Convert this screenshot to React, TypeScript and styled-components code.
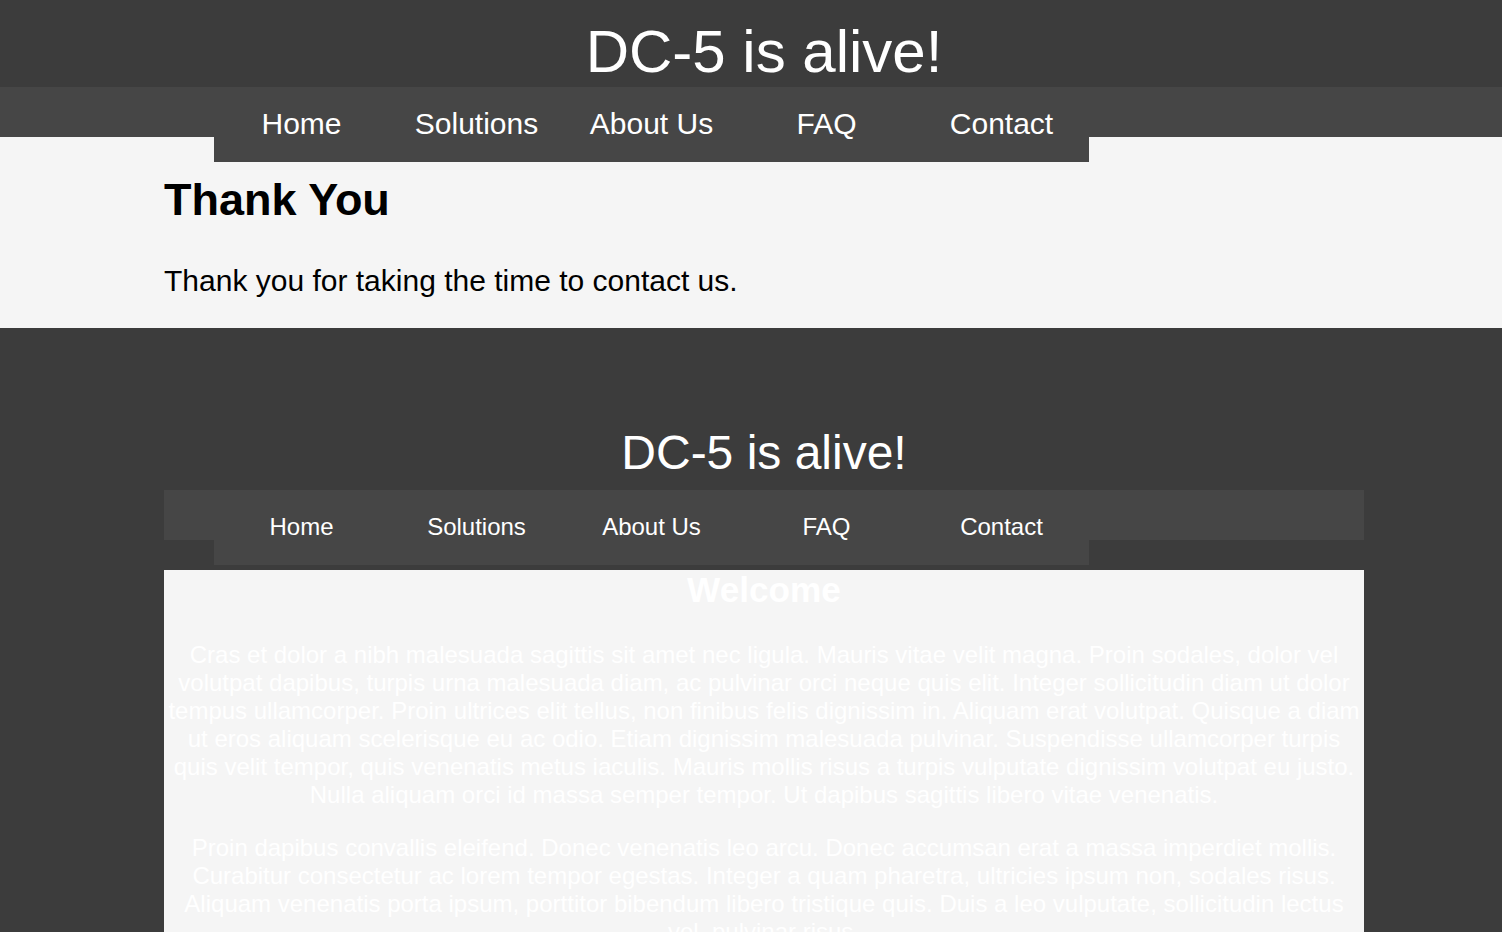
import styled, { createGlobalStyle } from "styled-components";

const GlobalStyle = createGlobalStyle`
    html, body {
        margin: 0;
        padding: 0;
        background-color: #3c3c3c;
        font-family: "Liberation Sans", Arial, sans-serif;
    }
`;

const Container = styled.div`
    width: 1200px;
    margin-left: 164px;
`;

const Header = styled.header<{ $height: number }>`
    height: ${(p) => p.$height}px;
    box-sizing: border-box;
    padding-top: 17px;
`;

const SiteTitle = styled.h1<{ $size: number }>`
    margin: 0;
    font-size: ${(p) => p.$size}px;
    font-weight: normal;
    color: #fff;
    text-align: center;
`;

const NavBar = styled.nav<{ $gap?: number }>`
    height: 50px;
    background-color: #464646;
    margin-bottom: ${(p) => p.$gap ?? 0}px;
`;

const NavList = styled.ul`
    position: relative;
    z-index: 1;
    display: flex;
    list-style: none;
    margin: 0 0 0 50px;
    padding: 0;
    width: 875px;
    height: 75px;
    background-color: #464646;
`;

const NavItem = styled.li<{ $size: number }>`
    width: 175px;
    line-height: 74px;
    text-align: center;
    font-size: ${(p) => p.$size}px;
    color: #fff;
`;

const Main = styled.main`
    background-color: #f5f5f5;
    padding-bottom: 30px;
`;

const Heading = styled.h2<{ $size: number; $align: string }>`
    font-size: ${(p) => p.$size}px;
    font-weight: bold;
    text-align: ${(p) => p.$align};
`;

const ThankHeading = styled(Heading)`
    margin: 0;
    padding-top: 37px;
    color: #000;
`;

const ThankText = styled.p`
    margin: 38px 0 0;
    font-size: 30px;
    color: #000;
`;

const Lower = styled.section`
    padding-top: 80px;
    background-color: #3c3c3c;
`;

const Content = styled.div`
    background-color: #f5f5f5;
    color: #fff;
    padding-bottom: 40px;
`;

const WelcomeHeading = styled(Heading)`
    margin: 0 0 31px;
    color: #fff;
`;

const Para = styled.p`
    margin: 0 0 25px;
    font-size: 24px;
    line-height: 28px;
    text-align: center;
`;

const links = ["Home", "Solutions", "About Us", "FAQ", "Contact"];

const paragraphs = [
    "Cras et dolor a nibh malesuada sagittis sit amet nec ligula. Mauris vitae velit magna. Proin sodales, dolor vel volutpat dapibus, turpis urna malesuada diam, ac pulvinar orci neque quis elit. Integer sollicitudin diam ut dolor tempus ullamcorper. Proin ultrices elit tellus, non finibus felis dignissim in. Aliquam erat volutpat. Quisque a diam ut eros aliquam scelerisque eu ac odio. Etiam dignissim malesuada pulvinar. Suspendisse ullamcorper turpis quis velit tempor, quis venenatis metus iaculis. Mauris mollis risus a turpis vulputate dignissim volutpat eu justo. Nulla aliquam orci id massa semper tempor. Ut dapibus sagittis libero vitae venenatis.",
    "Proin dapibus convallis eleifend. Donec venenatis leo arcu. Donec accumsan erat a massa imperdiet mollis. Curabitur consectetur ac lorem tempor egestas. Integer a quam pharetra, ultricies ipsum non, sodales risus. Aliquam venenatis porta ipsum, porttitor bibendum libero tristique quis. Duis a leo vulputate, sollicitudin lectus vel, pulvinar risus.",
];

function Nav({ size }: { size: number }) {
    return (
        <NavList>
            {links.map((link) => (
                <NavItem key={link} $size={size}>
                    {link}
                </NavItem>
            ))}
        </NavList>
    );
}

function App() {
    return (
        <>
            <GlobalStyle />
            <Header $height={87}>
                <Container>
                    <SiteTitle $size={60}>DC-5 is alive!</SiteTitle>
                </Container>
            </Header>
            <NavBar>
                <Container>
                    <Nav size={30} />
                </Container>
            </NavBar>
            <Main>
                <Container>
                    <ThankHeading $size={45} $align="left">
                        Thank You
                    </ThankHeading>
                    <ThankText>Thank you for taking the time to contact us.</ThankText>
                </Container>
            </Main>
            <Lower>
                <Container>
                    <Header $height={82}>
                        <SiteTitle $size={48}>DC-5 is alive!</SiteTitle>
                    </Header>
                    <NavBar $gap={30}>
                        <Nav size={24} />
                    </NavBar>
                    <Content>
                        <WelcomeHeading $size={35.2} $align="center">
                            Welcome
                        </WelcomeHeading>
                        {paragraphs.map((text, i) => (
                            <Para key={i}>{text}</Para>
                        ))}
                    </Content>
                </Container>
            </Lower>
        </>
    );
}

export default App;
